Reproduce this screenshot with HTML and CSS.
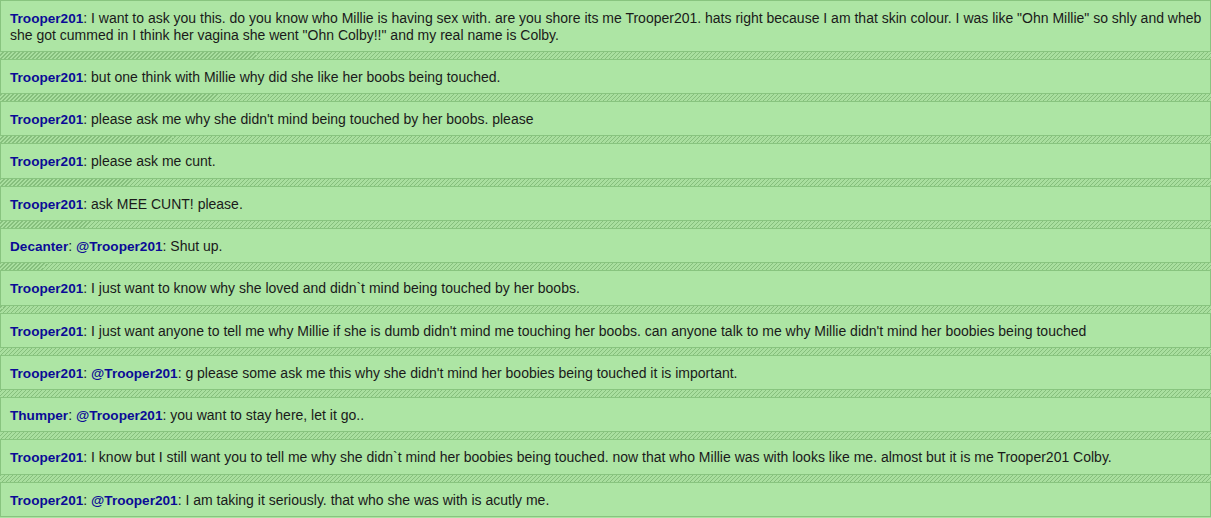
FILE: index.html
```html
<!DOCTYPE html>
<html>
<head>
<meta charset="utf-8">
<link rel="stylesheet" href="styles.css">
</head>
<body>
<ul class="chat">
  <li class="msg"><span class="user">Trooper201</span>: I want to ask you this. do you know who Millie is having sex with. are you shore its me Trooper201. hats right because I am that skin colour. I was like "Ohn Millie" so shly and wheb she got cummed in I think her vagina she went "Ohn Colby!!" and my real name is Colby.</li>
  <li class="msg"><span class="user">Trooper201</span>: but one think with Millie why did she like her boobs being touched.</li>
  <li class="msg"><span class="user">Trooper201</span>: please ask me why she didn't mind being touched by her boobs. please</li>
  <li class="msg"><span class="user">Trooper201</span>: please ask me cunt.</li>
  <li class="msg"><span class="user">Trooper201</span>: ask MEE CUNT! please.</li>
  <li class="msg"><span class="user">Decanter</span>: <span class="user">@Trooper201</span>: Shut up.</li>
  <li class="msg"><span class="user">Trooper201</span>: I just want to know why she loved and didn`t mind being touched by her boobs.</li>
  <li class="msg"><span class="user">Trooper201</span>: I just want anyone to tell me why Millie if she is dumb didn't mind me touching her boobs. can anyone talk to me why Millie didn't mind her boobies being touched</li>
  <li class="msg"><span class="user">Trooper201</span>: <span class="user">@Trooper201</span>: g please some ask me this why she didn't mind her boobies being touched it is important.</li>
  <li class="msg"><span class="user">Thumper</span>: <span class="user">@Trooper201</span>: you want to stay here, let it go..</li>
  <li class="msg"><span class="user">Trooper201</span>: I know but I still want you to tell me why she didn`t mind her boobies being touched. now that who Millie was with looks like me. almost but it is me Trooper201 Colby.</li>
  <li class="msg"><span class="user">Trooper201</span>: <span class="user">@Trooper201</span>: I am taking it seriously. that who she was with is acutly me.</li>
</ul>
</body>
</html>
```

FILE: styles.css
```css
html, body {
  margin: 0;
  padding: 0;
  background: #abe3a2;
}
.chat {
  list-style: none;
  margin: 0;
  padding: 0;
  background-color: #a9df9f;
  background-image: repeating-linear-gradient(135deg, #a9df9f 0, #a9df9f 2px, #86bf7d 2px, #86bf7d 2.83px);
  font-family: Arial, "Liberation Sans", sans-serif;
  font-size: 14px;
  line-height: 16.67px;
  color: #1a1a1a;
}
.msg {
  background: #ade5a4;
  border: 1px solid #88c47f;
  padding: 9px 3px 7.6px 9px;
  margin-bottom: 7px;
}
.user {
  font-size: 13.6px;
  line-height: 1;
  font-weight: bold;
  color: #0b0b96;
}
```
